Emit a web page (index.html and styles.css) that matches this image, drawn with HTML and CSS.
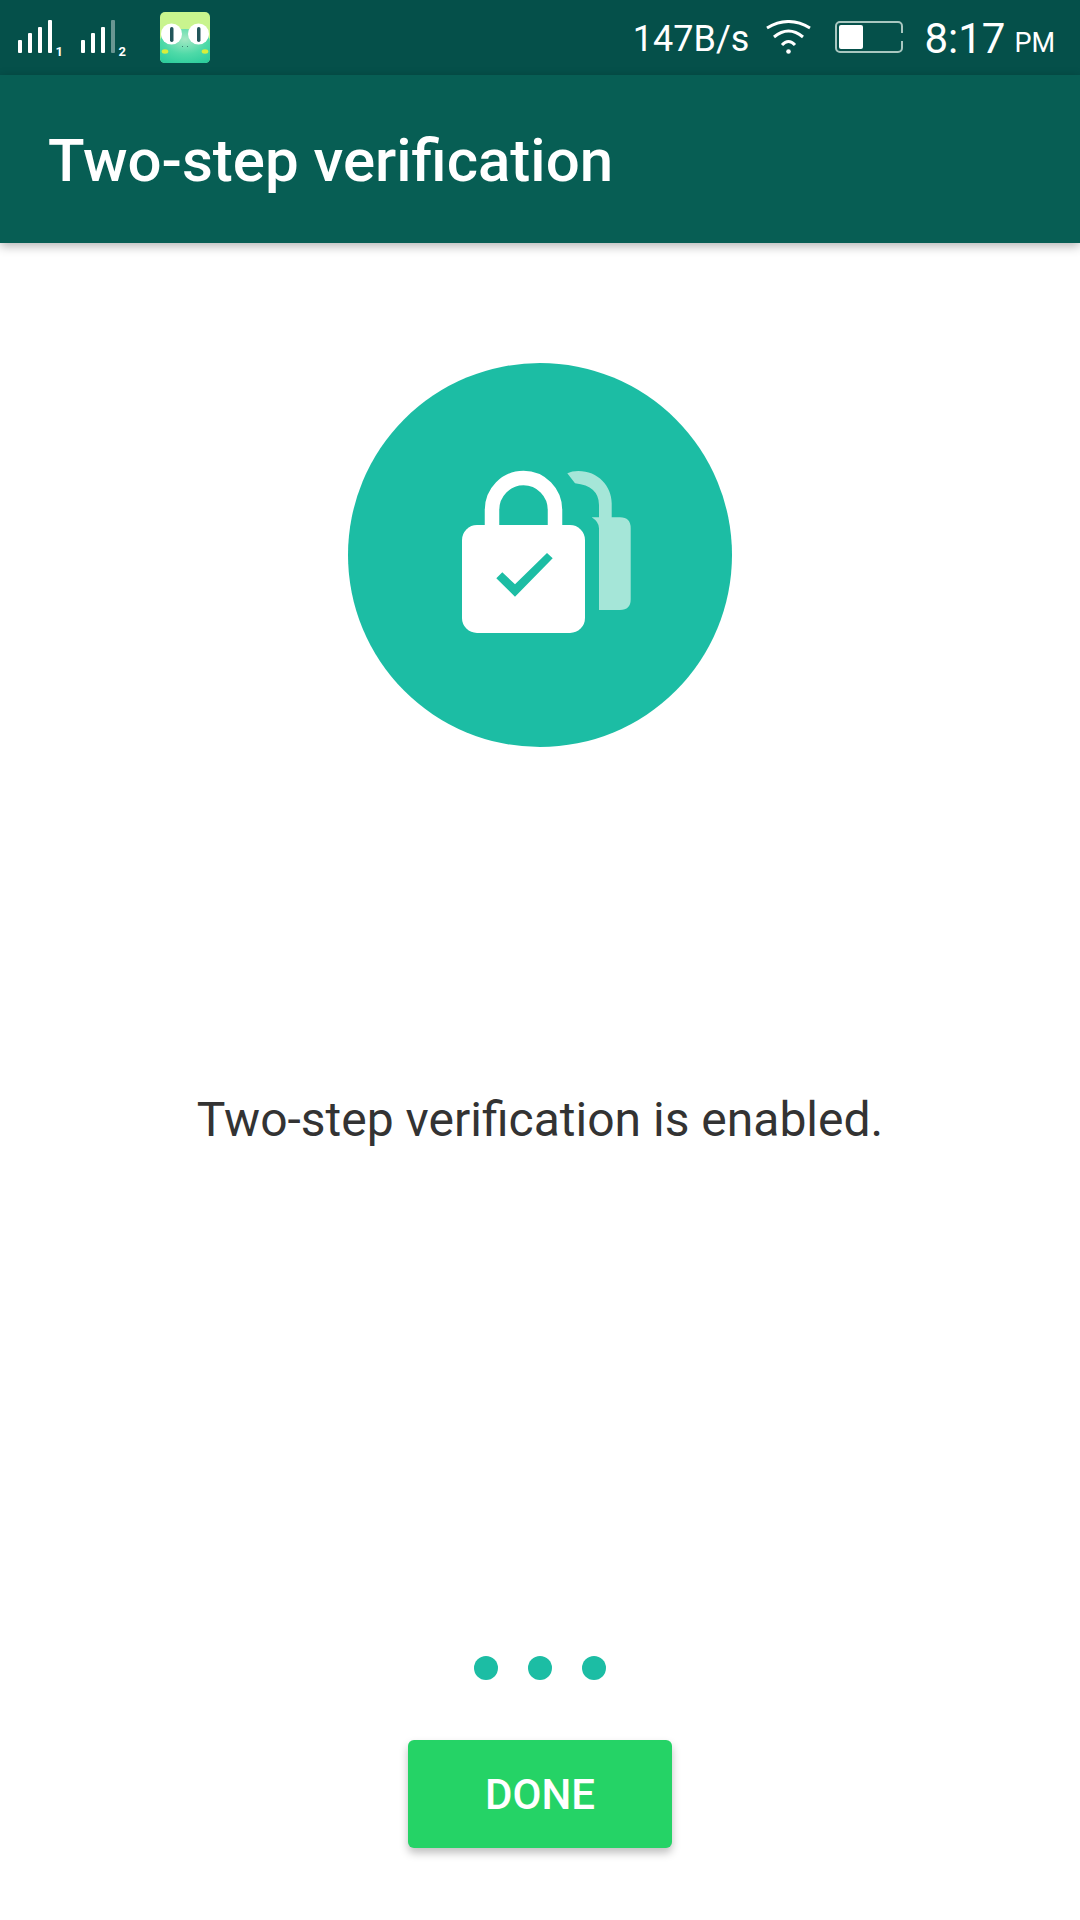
FILE: index.html

```html
<html>
  <head>
    <meta charset="utf-8">
    <title>Two-step verification</title>
    <link rel="stylesheet" href="styles.css">
  </head>
  <body>
    <div id="screen">
      <div id="status-bar">
        <div id="status-left">
          <svg class="signals" width="130" height="75" viewBox="0 0 130 75">
            <g fill="#fff">
              <rect x="18" y="40" width="4" height="13" rx="1"/>
              <rect x="28" y="33" width="4" height="20" rx="1"/>
              <rect x="38" y="27" width="4" height="26" rx="1"/>
              <rect x="48" y="20" width="4" height="33" rx="1"/>
              <rect x="81" y="40" width="4" height="13" rx="1"/>
              <rect x="91" y="33" width="4" height="20" rx="1"/>
              <rect x="101" y="27" width="4" height="26" rx="1"/>
              <rect x="111" y="20" width="4" height="33" rx="1" opacity="0.4"/>
            </g>
            <text class="sim-num" x="55.500" y="55.500">1</text>
            <text class="sim-num" x="118.500" y="55.500">2</text>
          </svg>
          <svg class="frog" width="50" height="51" viewBox="0 0 50 51">
            <defs>
              <radialGradient id="frog-body" cx="0.5" cy="0.3" r="0.8">
                <stop offset="0" stop-color="#a5e8c4"/>
                <stop offset="0.55" stop-color="#4fdaa8"/>
                <stop offset="1" stop-color="#2bcc9c"/>
              </radialGradient>
            </defs>
            <rect width="50" height="51" rx="5" fill="#c9f48e"/>
            <path d="M0 30 Q0 17 25 17 Q50 17 50 30 L50 46 Q50 51 45 51 L5 51 Q0 51 0 46 Z" fill="url(#frog-body)"/>
            <circle cx="11.500" cy="22" r="10.500" fill="#fff"/>
            <circle cx="38.500" cy="22" r="10.500" fill="#fff"/>
            <rect x="10" y="15" width="3.500" height="15" rx="1.700" fill="#22565a"/>
            <rect x="37" y="15" width="3.500" height="15" rx="1.700" fill="#22565a"/>
            <ellipse cx="5" cy="39.500" rx="3.300" ry="2.200" fill="#d8ee3c"/>
            <ellipse cx="45" cy="39.500" rx="3.300" ry="2.200" fill="#d8ee3c"/>
            <rect x="22" y="34" width="1" height="1" fill="#3a7f70"/>
            <rect x="27" y="34" width="1" height="1" fill="#3a7f70"/>
          </svg>
        </div>
        <div id="status-right">
          <span class="net-speed">147B/s</span>
          <svg class="wifi" width="45" height="34" viewBox="0 0 45 34">
            <g fill="none" stroke="#fff" stroke-width="3">
              <path d="M1 8 Q22.500 -5 44 8"/>
              <path d="M8 17 Q22.500 5 37 17"/>
              <path d="M16 25 Q22.500 18 29 25"/>
            </g>
            <circle cx="22.500" cy="31.500" r="2.300" fill="#fff"/>
          </svg>
          <svg class="battery" width="68" height="32" viewBox="0 0 68 32">
            <rect x="1" y="1" width="66" height="30" rx="4" fill="none" stroke="#a9c7c0" stroke-width="2"/>
            <rect x="65" y="12" width="4" height="8" fill="#05504a"/>
            <rect x="4" y="4" width="24" height="24" rx="2" fill="#fff"/>
          </svg>
          <span class="clock">8:17</span>
          <span class="clock-ampm">PM</span>
        </div>
      </div>

      <div id="app-bar">
        <h1>Two-step verification</h1>
      </div>

      <div id="content">
        <div id="lock-badge">
          <svg width="384" height="384" viewBox="0 1 384 384">
            <!-- back lock, faded -->
            <path fill="#a5e6d8" d="M219.300 111.300 Q224 109 230.300 109 C250 109 263.700 124 263.700 141.300 L263.700 155.300 L272 155.300 Q282.700 155.300 282.700 166.300 L282.700 237.300 Q282.700 248 272 248 L251 248 L251 166.300 Q251 160 243.700 155.300 L251 155.300 L251 143 Q251 124 227 121.300 Z"/>
            <!-- front lock -->
            <path d="M144 168 L144 148 A31.500 32 0 0 1 207 148 L207 168" fill="none" stroke="#fff" stroke-width="14.500"/>
            <rect x="114" y="163" width="123" height="108" rx="15" fill="#fff"/>
            <polygon fill="#1cbda4" points="148.300,216.300 154.300,210.300 167,222.300 199,191 204.700,196.300 167,234.700"/>
          </svg>
        </div>

        <p id="message">Two-step verification is enabled.</p>

        <div id="pager">
          <span class="dot"></span>
          <span class="dot"></span>
          <span class="dot"></span>
        </div>

        <button id="done-btn">DONE</button>
      </div>
    </div>
  </body>
</html>
```

FILE: styles.css

```css
/* Whole phone screen */
body {
  margin: 0;
  background: #fff;
  font-family: Roboto, "Liberation Sans", sans-serif;
}

#screen {
  display: flex;
  flex-direction: column;
  width: 1080px;
  height: 1920px;
  overflow: hidden;
}

/* Status bar */
#status-bar {
  display: flex;
  justify-content: space-between;
  align-items: center;
  height: 75px;
  background: #05504a;
  color: #fff;
}

#status-left {
  display: flex;
  align-items: center;
}

.sim-num {
  fill: #fff;
  font-size: 13px;
  font-weight: 700;
}

.frog {
  margin-left: 30px;
}

#status-right {
  display: flex;
  align-items: center;
  padding-top: 2px;
}

.net-speed {
  font-size: 36px;
  margin-right: 17px;
}

.wifi {
  margin-right: 24px;
  margin-top: -4px;
}

.battery {
  margin-right: 21px;
  margin-top: -3px;
}

.clock {
  font-size: 42px;
}

.clock-ampm {
  font-size: 27px;
  margin-left: 9px;
  margin-top: 8px;
  margin-right: 25px;
}

/* Top app bar */
#app-bar {
  display: flex;
  align-items: center;
  height: 168px;
  padding-left: 48px;
  padding-top: 2px;
  box-sizing: border-box;
  background: #075e54;
  box-shadow: 0 3px 10px rgba(0, 0, 0, 0.3);
  position: relative;
}

#app-bar h1 {
  margin: 0;
  color: #fff;
  font-size: 60px;
  font-weight: 500;
}

/* Main content column */
#content {
  display: flex;
  flex-direction: column;
  align-items: center;
  flex: 1;
}

#lock-badge {
  width: 384px;
  height: 384px;
  margin-top: 120px;
  border-radius: 50%;
  background: #1cbda4;
}

#message {
  margin: 343px 0 0;
  color: #333;
  font-size: 48px;
  line-height: 60px;
}

#pager {
  display: flex;
  gap: 30px;
  margin-top: 506px;
}

.dot {
  width: 24px;
  height: 24px;
  border-radius: 50%;
  background: #1cbda4;
}

#done-btn {
  width: 264px;
  height: 108px;
  margin-top: 60px;
  border: none;
  border-radius: 6px;
  background: #25d366;
  color: #fff;
  font-family: inherit;
  font-size: 42px;
  font-weight: 500;
  box-shadow: 0 5px 8px rgba(0, 0, 0, 0.25);
}
```
